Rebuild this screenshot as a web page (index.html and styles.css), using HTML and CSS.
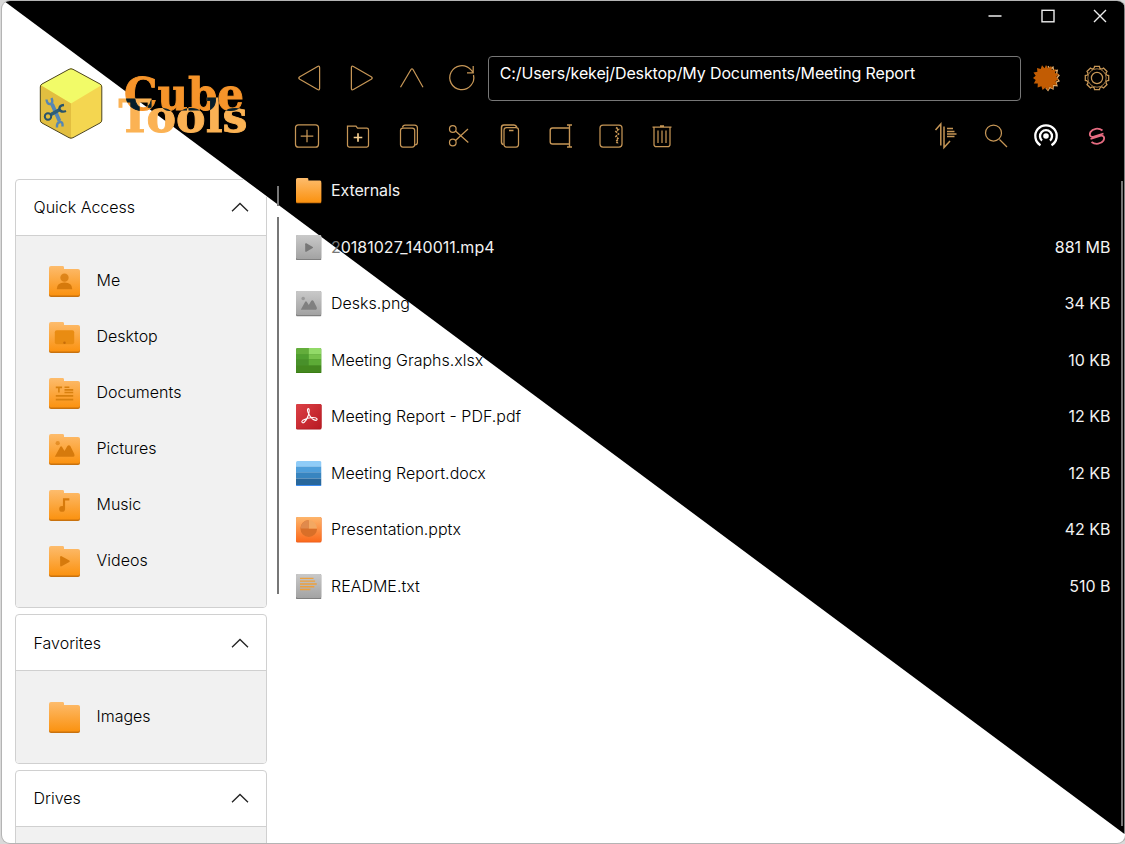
FILE: index.html
```html
<!DOCTYPE html>
<html lang="en">
<head>
<meta charset="utf-8">
<title>Cube Tools</title>
<link rel="stylesheet" href="styles.css">
</head>
<body>
<svg class="defs" width="0" height="0">
  <defs>
    <linearGradient id="gFolder" x1="0" y1="0" x2="0" y2="1"><stop offset="0" stop-color="#fdbc6d"/><stop offset="1" stop-color="#fb9210"/></linearGradient>
    <linearGradient id="gGray" x1="0" y1="0" x2="0" y2="1"><stop offset="0" stop-color="#c9c9c9"/><stop offset="1" stop-color="#a3a3a3"/></linearGradient>
    <linearGradient id="gRed" x1="0" y1="0" x2="1" y2="1"><stop offset="0" stop-color="#dc4046"/><stop offset="1" stop-color="#b81a22"/></linearGradient>
    <linearGradient id="gOrange" x1="0" y1="0" x2="0" y2="1"><stop offset="0" stop-color="#fdb56b"/><stop offset="1" stop-color="#fb6a1c"/></linearGradient>
    <clipPath id="tile"><rect width="32" height="32" rx="2"/></clipPath>
    <path id="tooth" d="M-2.920-9.560L-2.450-11.700H2.450L2.920-9.560Q3.900-9.300 4.690-8.830"/>
    <symbol id="folder" viewBox="0 0 32 32">
      <path d="M0 6h32v24q0 2-2 2H2q-2 0-2-2z" fill="#c9720e"/>
      <path d="M0 2q0-2 2-2h12q1.500 0 1.500 1.500V3H30q2 0 2 2v23.500q0 2-2 2H2q-2 0-2-2z" fill="url(#gFolder)"/>
    </symbol>
    <symbol id="graytile" viewBox="0 0 32 32"><rect width="32" height="32" rx="2" fill="#7f7f7f"/><rect width="32" height="30" rx="2" fill="url(#gGray)"/></symbol>
    <symbol id="hills" viewBox="0 0 32 32"><circle cx="9" cy="9.500" r="2.200" opacity=".6"/><path d="M6 23.500l5.500-10q1-1.500 2 0l2.500 4 3-5q1.500-2 3 0l4 8q1 3-1 3z"/></symbol>
    <symbol id="play" viewBox="0 0 32 32"><path d="M11.500 11.500q0-1.500 1.500-1l8 4.500q1 .7 0 1.400l-8 4.600q-1.500.5-1.500-1z"/></symbol>
    <symbol id="up" viewBox="0 0 20 12"><path d="M2 10.300L10 2.500l8 7.800" fill="none" stroke="#222" stroke-width="1.300"/></symbol>
  </defs>
</svg>

<div class="window">
  <div class="titlebar">
    <div class="winbtn"><svg width="16" height="16"><path d="M1.500 8h13"/></svg></div>
    <div class="winbtn"><svg width="16" height="16"><rect x="2" y="2.300" width="12" height="11.500"/></svg></div>
    <div class="winbtn"><svg width="16" height="16"><path d="M2 2l12 12M14 2L2 14"/></svg></div>
  </div>

  <div class="content">
    <aside class="side">
      <div class="logo">
        <svg class="cube" width="66" height="74" viewBox="38 67 66 74">
          <path d="M71 68.300L101.800 85v37L71 138.600 40.300 122V85z" fill="#f4d650"/>
          <path d="M71 68.300L101.800 85 71 103.500 40.300 85z" fill="#f2fb68"/>
          <path d="M40.300 85L71 103.500v35L40.300 122z" fill="#e2be40"/>
          <path d="M73 69.300L100 84q1.800 1 1.800 3v33q0 2-1.800 3L73 137.700q-2 1-4 0L42 123q-1.700-1-1.700-3V87q0-2 1.700-3L69 69.300q2-1 4 0z" fill="none" stroke="#4c4520"/>
          <g fill="none">
            <path d="M52 104l7.500 17" stroke="#5586b4" stroke-width="3.800"/>
            <path d="M46.500 99.500q.5 5 4 4.500 3-1 1-6M57 127.500q-.5-5 3-5.500 3-.5 2.500 4.500" stroke="#5586b4" stroke-width="2.400"/>
            <path d="M51 114.500l9-5" stroke="#2f5f78" stroke-width="3.600"/>
            <circle cx="48" cy="116.500" r="3.200" stroke="#28536b" stroke-width="2"/>
            <path d="M64 105q-5 .5-4.500 4 1.500 4 6.500 2" stroke="#28536b" stroke-width="2.400"/>
          </g>
        </svg>
        <svg class="wordmark" width="132" height="66" viewBox="117 72 132 66">
          <text x="124" y="110" textLength="120" lengthAdjust="spacingAndGlyphs" fill="#f6942a" stroke="#f6942a">Cube</text>
          <text class="blend" x="118.500" y="131.500" textLength="129" lengthAdjust="spacingAndGlyphs" fill="#fbb254" stroke="#fbb254">Tools</text>
        </svg>
      </div>

      <div class="panels">
        <div class="cards">
          <section class="card split">
            <header><span>Quick Access</span><svg width="20" height="12"><use href="#up"/></svg></header>
            <ul>
              <li><svg viewBox="0 0 32 32"><use href="#folder"/><g fill="#d67a0c"><circle cx="16" cy="12" r="4.300" opacity=".8"/><path d="M8 24q0-7 8-7t8 7z"/></g></svg>Me</li>
              <li><svg viewBox="0 0 32 32"><use href="#folder"/><path d="M8 8.500h16q2 0 2 2V21q0 2-2 2H8q-2 0-2-2V10.500q0-2 2-2z" fill="#e98c12"/><circle cx="16" cy="21.500" r="1.300" fill="#c76d08"/></svg>Desktop</li>
              <li><svg viewBox="0 0 32 32"><use href="#folder"/><path d="M7 9.700h6.500M10.200 9v6M16 9.500h5M16 12.300h9M16 15h9M7 18.500h18M7 22.300h18" stroke="#d8800e" stroke-width="1.700" fill="none"/></svg>Documents</li>
              <li><svg viewBox="0 0 32 32"><use href="#folder"/><use href="#hills" fill="#d67a0c"/></svg>Pictures</li>
              <li><svg viewBox="0 0 32 32"><use href="#folder"/><circle cx="13.500" cy="19.500" r="3" fill="#d67a0c"/><path d="M15.500 20V9.700h5.500" stroke="#d67a0c" stroke-width="2.200" fill="none"/></svg>Music</li>
              <li><svg viewBox="0 0 32 32"><use href="#folder"/><use href="#play" fill="#d67a0c"/></svg>Videos</li>
            </ul>
          </section>
          <section class="card">
            <header><span>Favorites</span><svg width="20" height="12"><use href="#up"/></svg></header>
            <ul><li><svg viewBox="0 0 32 32"><use href="#folder"/></svg>Images</li></ul>
          </section>
          <section class="card">
            <header><span>Drives</span><svg width="20" height="12"><use href="#up"/></svg></header>
            <ul><li></li></ul>
          </section>
        </div>
        <div class="scroll"><i class="s1"></i><i class="s2"></i></div>
      </div>
    </aside>

    <main class="main">
      <div class="nav">
        <div class="btn"><svg viewBox="-18 -18 36 36"><path d="M-10.200-1.300L7.600-11.500q2-1 2 1.200v20.600q0 2.200-2 1.200L-10.200 1.300q-2-1.300 0-2.600z"/></svg></div>
        <div class="btn"><svg viewBox="-18 -18 36 36"><path d="M10.200-1.300L-7.600-11.500q-2-1-2 1.200v20.600q0 2.200 2 1.200L10.200 1.300q2-1.300 0-2.600z"/></svg></div>
        <div class="btn"><svg viewBox="-18 -18 36 36"><path d="M-11.500 9.300L-1-8.500Q0-10 1-8.500L11 9.300"/></svg></div>
        <div class="btn"><svg viewBox="-18 -18 36 36"><path d="M11.500-3A12 12 0 1 1 8.500-8.600L11-5.800M11.200-12v6.800H5"/></svg></div>
        <div class="path">C:/Users/kekej/Desktop/My Documents/Meeting Report</div>
        <div class="btn"><svg viewBox="-18 -18 36 36"><path d="M2-11.800l2 3 3-2 .6 3.600 3.700-.5-.8 3.600L13-2.500 10.800 0 13 3l-3 1.200 1 3.600-3.800-.4L7 11l-3-1.800L2 12.500l-2.300-2.800" stroke="#e3b071" stroke-width="1.300"/><path d="M0-13l2.100 3.300L5.200-12l.7 3.900 3.900-.6-.9 3.800 3.900.8L10.200-1 12.500 1.500 9.400 3.200l1.500 3.700-3.900-.2-.1 4-3.500-1.900L2 12.500-.4 9.400-3.400 12l-1.200-3.800-3.800 1.300.2-3.900-4-.2 1.900-3.400L-13 0l2.700-2.300L-12.500-5.600l3.900-.6L-9-10.100l3.700 1.200L-4-12.700l2.600 2.900z" fill="#c25c03" stroke="none"/></svg></div>
        <div class="btn"><svg viewBox="-18 -18 36 36"><circle r="5.600"/><circle r="9.200" stroke-width=".8"/><use href="#tooth"/><use href="#tooth" transform="rotate(45)"/><use href="#tooth" transform="rotate(90)"/><use href="#tooth" transform="rotate(135)"/><use href="#tooth" transform="rotate(180)"/><use href="#tooth" transform="rotate(225)"/><use href="#tooth" transform="rotate(270)"/><use href="#tooth" transform="rotate(315)"/></svg></div>
      </div>

      <div class="tools">
        <div class="btn"><svg viewBox="-18 -18 36 36"><rect x="-11.500" y="-11.200" width="23" height="22.400" rx="3"/><path d="M-6.300 0H6.300M0-6.300V6.300"/></svg></div>
        <div class="btn"><svg viewBox="-18 -18 36 36"><path d="M-10.500-9.800H-2l1.500 2h9.300q1.700 0 1.700 1.700V9.300q0 1.700-1.700 1.700H-8.800q-1.700 0-1.700-1.700z"/><path d="M-4.300 1.500H4.300M0-2.800V5.800" stroke="#f5cf91" stroke-width="1.700"/></svg></div>
        <div class="btn"><svg viewBox="-18 -18 36 36"><rect x="-8.500" y="-8" width="14.200" height="19" rx="2.500"/><path d="M-6.500-8.500q.5-2.300 2.500-2.300H5.500q2.900 0 2.900 2.900V6.500q0 2.200-2.500 2.500"/></svg></div>
        <div class="btn"><svg viewBox="-18 -18 36 36"><circle cx="-6.200" cy="-7" r="3.300"/><circle cx="-6.200" cy="6.500" r="3.300"/><path d="M-3.500-5L9.300 6.500M-3.500 4.500L9-7"/></svg></div>
        <div class="btn"><svg viewBox="-18 -18 36 36"><rect x="-6" y="-8.500" width="14.500" height="19.500" rx="2.500"/><path d="M-6.500 8.500q-2-.3-2-2.500V-8.500q0-2.500 2.500-2.500H4q2 0 2.800 2.300M-1-5.500H3.500" stroke-width="1.500"/></svg></div>
        <div class="btn"><svg viewBox="-18 -18 36 36"><path d="M8-8H-8.500q-2.300 0-2.300 2.300V5.700Q-10.800 8-8.500 8H8M6-11h5M8.500-11v22M6 11h5" stroke-width="1.400"/></svg></div>
        <div class="btn"><svg viewBox="-18 -18 36 36"><rect x="-11" y="-11" width="22" height="22" rx="3"/><path d="M5-8.500l2.500 1.700L5-4.500 7.500-2 5 .5 7.500 3 5 5.300 7.500 8" stroke-dasharray="2 1" stroke-width="1.700"/></svg></div>
        <div class="btn"><svg viewBox="-18 -18 36 36"><path d="M-9.500-9h19M-2-10.200h4M-8-9V8.500Q-8 10.700-5.500 10.700h11Q8 10.700 8 8.500V-9M-4-5.500V7M0-5.500V7M4-5.500V7"/></svg></div>
        <div class="spacer"></div>
        <div class="btn"><svg viewBox="-18 -18 36 36"><path d="M-9.500-6L-4.200-12V9.500M-1-9.500V11.500L5 5" stroke-width="1.500"/><path d="M2-7.500H8M2-4.500H9.500M2-2H11.500M2 .5H9.500" stroke-width="1.300"/></svg></div>
        <div class="btn"><svg viewBox="-18 -18 36 36"><circle cx="-2.500" cy="-3" r="8"/><path d="M3.500 3.500L11 11"/></svg></div>
        <div class="btn"><svg viewBox="-18 -18 36 36" class="cast"><circle r="2.800" fill="#fff" stroke="none"/><path d="M-4 4.600A6 6 0 1 1 4 4.600M-5.500 9.200A10.700 10.700 0 1 1 5.500 9.200"/></svg></div>
        <div class="btn"><svg viewBox="-18 -18 36 36" class="snap"><path d="M5.500-5.500C1.500-8.500-4.500-7.500-6.500-4-8.500 0-5.500 1.500-3 .7L6.500-2.500M-5.500 6C-1.500 9 4.500 8 6.500 4.500 8.500.5 5.500-1 3-.2L-6.500 3"/></svg></div>
      </div>

      <div class="files">
        <div class="file light"><svg viewBox="0 0 32 32"><use href="#folder"/></svg><span class="tight">Externals</span></div>
        <div class="file light"><svg viewBox="0 0 32 32"><use href="#graytile"/><use href="#play" fill="#777"/></svg><span><b>2</b>0181027_140011.mp4</span><em>881 MB</em></div>
        <div class="file"><svg viewBox="0 0 32 32"><use href="#graytile"/><use href="#hills" fill="#808080"/></svg><span>Desks.png</span><em>34 KB</em></div>
        <div class="file"><svg viewBox="0 0 32 32"><g clip-path="url(#tile)"><path fill="#48902a" d="M0 0h32v32H0z"/><path fill="#63ad3b" d="M0 0h16v8H0z"/><path fill="#92da68" d="M16 0h16v8H16z"/><path fill="#4f9e2f" d="M0 8h16v6H0z"/><path fill="#78c34d" d="M16 8h16v6H16z"/><path fill="#5dab36" d="M16 14h16v8H16z"/><path fill="#44881f" d="M0 22h32v8H0z"/><path fill="#3a7d14" d="M0 30h32v2H0z"/></g></svg><span>Meeting Graphs.xlsx</span><em>10 KB</em></div>
        <div class="file"><svg viewBox="0 0 32 32"><rect width="32" height="32" rx="2" fill="#a8151c"/><rect width="32" height="31" rx="2" fill="url(#gRed)"/><path d="M15 6c2-1 1.800 3 .8 7.500-1 3-3.300 7.500-5.800 9.800-2 1-4-1-1.500-2.800 4-2.500 9-3.700 13.500-3.500 5 0 5.500 3 3 3.500-3.500 0-7-4-8.800-7.500-1.600-3-2.300-6-1.200-7z" fill="none" stroke="#fff" stroke-width="1.400"/></svg><span>Meeting Report - PDF.pdf</span><em>12 KB</em></div>
        <div class="file"><svg viewBox="0 0 32 32"><g clip-path="url(#tile)"><path fill="#8fccf8" d="M0 0h32v7H0z"/><path fill="#4f9fdb" d="M0 7h32v7H0z"/><path fill="#3885c0" d="M0 14h32v8H0z"/><path fill="#28679c" d="M0 22h32v8H0z"/><path fill="#3d8df2" d="M0 30h32v2H0z"/></g></svg><span>Meeting Report.docx</span><em>12 KB</em></div>
        <div class="file"><svg viewBox="0 0 32 32"><rect width="32" height="32" rx="2" fill="#e75a1c"/><rect width="32" height="31" rx="2" fill="url(#gOrange)"/><path d="M16 4v10.500h10.500A10.500 10.500 0 1 1 16 4z" fill="#d96f28"/><path d="M16 14.500V4A10.500 10.500 0 0 1 26.500 14.500z" fill="#f3a862"/><path d="M16 4v10.500H5.500A10.500 10.500 0 0 1 16 4z" fill="#e08a4c"/></svg><span>Presentation.pptx</span><em>42 KB</em></div>
        <div class="file"><svg viewBox="0 0 32 32"><use href="#graytile"/><path d="M5 5.500h17M5 9h19M5 12.500h21M5 16h18M5 19.500h13" stroke="#eda03c" stroke-width="1.700"/></svg><span>README.txt</span><em>510 B</em></div>
      </div>
    </main>
    <div class="edge"></div>
  </div>
</div>
</body>
</html>
```

FILE: styles.css
```css
* { box-sizing: border-box; }
html { height: 100%; overflow: hidden; background: #d9d9d9; }
body {
  margin: 0;
  padding: 1px 0 0 2px;
  height: 844px;
  overflow: hidden;
  font-family: Inter, "Liberation Sans", sans-serif;
  font-size: 16px;
  font-weight: 300;
  color: #000;
}
.defs { position: absolute; }
svg { display: block; flex: none; }

.window {
  width: 1122.5px;
  height: 841.5px;
  overflow: hidden;
  display: flex;
  flex-direction: column;
  border-radius: 8px;
  box-shadow: 0 0 0 1px #b4b4b4;
  background: #fff;
  position: relative;
  isolation: isolate;
}
/* dark half of the split theme */
.window::before {
  content: "";
  position: absolute;
  inset: 0;
  z-index: -1;
  background: #000;
  clip-path: polygon(2px 0, 100% 0, 100% 833px, 2px 0);
}

.titlebar { display: flex; justify-content: flex-end; height: 30px; flex: none; margin: 0 -2px 1px 0; }
.winbtn { width: 52.5px; display: grid; place-items: center; }
.winbtn svg { fill: none; stroke: #eee; stroke-width: 1.4; }

.content { display: flex; flex: 1; min-height: 0; }
.side { width: 278px; flex: none; display: flex; flex-direction: column; }
.logo { display: flex; height: 146.6px; flex: none; padding: 35px 0 0 36px; gap: 13px; }
.wordmark {
  margin-top: 5px;
  overflow: visible;
  isolation: isolate;
  font-family: "DejaVu Serif", serif;
  font-weight: 700;
  font-size: 45px;
  stroke-width: 0.9px;
}
.blend { mix-blend-mode: difference; }
.panels { display: flex; }
.cards { width: 252.5px; margin-left: 12.5px; display: flex; flex-direction: column; gap: 6.5px; }
.card { border: 1px solid #d0d0d0; border-radius: 4px; background: #fff; overflow: hidden; }
.split { clip-path: polygon(0 0, calc(100% - 25px) 0, 100% 18.5px, 100% 100%, 0 100%); }
.card header {
  height: 56px;
  padding: 0 16px 0.8px 18px;
  display: flex;
  align-items: center;
  justify-content: space-between;
  border-bottom: 1px solid #d0d0d0;
}
.card ul { margin: 0; padding: 16.8px 0 18.6px 33px; list-style: none; background: #f1f1f1; }
.card li { height: 56px; display: flex; align-items: center; gap: 17px; }
.card li svg { width: 31px; height: 31px; margin-top: 2px; }

.scroll { width: 2px; margin: 7px 0 0 9.5px; }
.scroll i { display: block; width: 2px; background: #777; }
.scroll .s1 { height: 20px; margin-bottom: 11px; }
.scroll .s2 { height: 377px; }

.main { flex: 1; min-width: 0; display: flex; flex-direction: column; padding-right: 2px; }
.btn { width: 50.7px; display: grid; place-items: center; flex: none; }
.btn svg { width: 36px; height: 36px; fill: none; stroke: #c69656; stroke-width: 1.25; }
.btn .cast { stroke: #fff; stroke-width: 2.3; }
.btn .snap { stroke: #e56b80; stroke-width: 1.8; }
.nav { display: flex; height: 45px; margin: 23.5px 0 0 5px; }
.path {
  flex: 1;
  border: 1.5px solid #777;
  border-radius: 4px;
  padding: 6px 11px;
  line-height: 20px;
  color: #fff;
  white-space: nowrap;
  font-weight: 400;
  letter-spacing: -0.125px;
}
.tools { display: flex; height: 50px; margin: 10.5px 0 0 2px; }
.spacer { flex: 1; }
.files { padding: 0 12px 0 16px; margin-top: 0.8px; }
.file { height: 56.5px; display: flex; align-items: center; }
.file svg { width: 25.5px; height: 25.5px; margin: 2px 9.5px 0 0; }
.file em { margin-left: auto; font-style: normal; color: #f2f2f2; font-weight: 400; }
.light { color: #f2f2f2; font-weight: 400; }
.light b { color: #777; font-weight: 400; }
.tight { letter-spacing: -0.12px; }
.edge { width: 2px; height: 645px; margin: 149px 1.5px 0 -3.5px; background: #777; flex: none; }
```
